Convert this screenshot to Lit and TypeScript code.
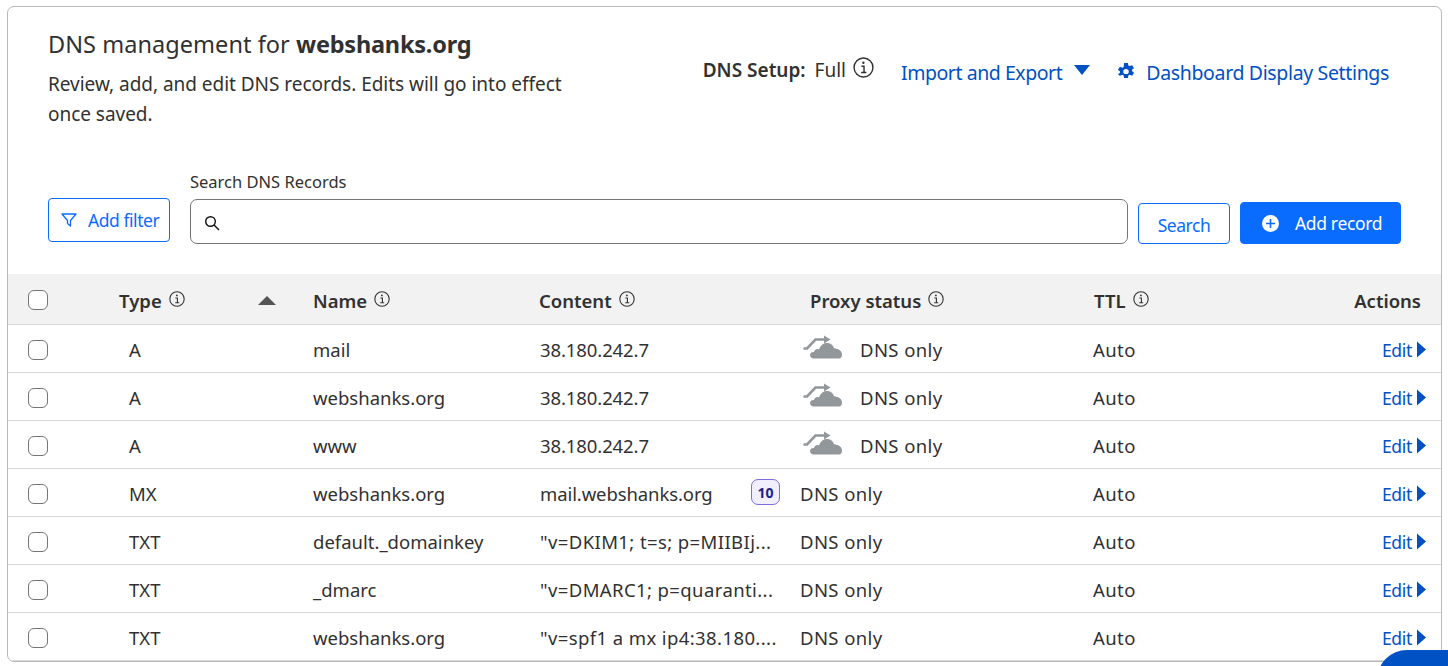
import { LitElement, html, css } from "lit";
import { customElement } from "lit/decorators.js";

const info = (cls = "info") => html`<svg class=${cls} viewBox="0 0 16 16" fill="none" stroke="#333" stroke-width="1.1"><circle cx="8" cy="8" r="7.2"/><path d="M6.4 7h2v4.6M6.2 11.8h4" /><circle cx="7.9" cy="4.4" r=".9" fill="#333" stroke="none"/></svg>`;

const cloud = html`<svg class="cloud" viewBox="0 0 40 24" fill="#92979b">
  <path d="M11 23.500C8 23.500 7 21.500 7 20 7 18 9 16.500 11 17 11.500 14.500 14 13.500 16 14.500 17.500 10.500 20 8 24 8 28 8 30.500 10.500 31 13.500 32 13 33 13.300 33.500 14 36.500 14 39 16.500 39 19.500 39 21.500 38 23.500 36 23.500Z"/>
  <path d="M0.500 13.500h3.500L12.500 4.500h9" fill="none" stroke="#92979b" stroke-width="2.600"/>
  <path d="M21 0.500l6.500 4-6.500 4z"/>
</svg>`;

const rows = [
  ["A", "mail", "38.180.242.7", true],
  ["A", "webshanks.org", "38.180.242.7", true],
  ["A", "www", "38.180.242.7", true],
  ["MX", "webshanks.org", "mail.webshanks.org", false, "10"],
  ["TXT", "default._domainkey", '"v=DKIM1; t=s; p=MIIBIj...', false],
  ["TXT", "_dmarc", '"v=DMARC1; p=quaranti...', false],
  ["TXT", "webshanks.org", '"v=spf1 a mx ip4:38.180....', false],
] as [string, string, string, boolean, string?][];

@customElement("app-root")
export class AppRoot extends LitElement {
  static styles = css`
    :host { display: block; height: 666px; box-sizing: border-box; padding: 6px 6px 4px 7px; position: relative; overflow: hidden; background: #fff;
      font-family: "Noto Sans", "Open Sans", sans-serif; color: #313131; font-size: 18px; }
    * { box-sizing: border-box; }
    .card { height: 656px; border: 1px solid #b9b9b9; border-radius: 7px; overflow: hidden; display: flex; flex-direction: column; }
    .top { height: 267px; padding: 0 40px; display: flex; flex-direction: column; }
    .head { display: flex; justify-content: space-between; height: 163px; }
    .intro { padding-top: 21px; }
    h1 { margin: 0; font-size: 23.5px; font-weight: 400; line-height: 32px; letter-spacing: .05px; }
    h1 b { font-weight: 700; letter-spacing: -.22px; }
    p { margin: 9px 0 0; width: 530px; line-height: 30px; font-size: 19px; letter-spacing: -.03px; }
    .tools { display: flex; align-items: flex-start; padding: 47px 12px 0 0; }
    .setup { display: flex; align-items: center; height: 30px; margin-top: 1px; font-size: 19px; }
    .setup b { font-weight: 600; margin-right: 9px; }
    .setup .big { width: 21px; height: 21px; margin: -6px 0 0 7px; }
    a { color: #0051c3; text-decoration: none; }
    .link { display: flex; align-items: center; height: 30px; margin-top: 3px; font-size: 19.5px; letter-spacing: -.45px; }
    .imp { margin-left: 27px; }
    .dash { margin-left: 28px; letter-spacing: -.35px; }
    .tri { width: 16px; height: 10px; margin: -4px 0 0 12px; }
    .gear { width: 16px; height: 17px; margin: -2px 12px 0 0; }
    .bar { display: flex; align-items: flex-end; }
    .btn { height: 44px; border: 1px solid #0a6cff; border-radius: 4px; color: #0a6cff; display: flex; align-items: center; background: #fff; font-size: 17.5px; letter-spacing: -.45px; }
    .filter { width: 122px; padding-left: 11px; margin-bottom: 2px; }
    .filter svg { width: 18px; height: 18px; margin-right: 10px; }
    .field { flex: none; width: 938px; margin-left: 20px; }
    label { display: block; font-size: 16.5px; line-height: 24px; margin-bottom: 5px; }
    .input { height: 45px; border: 1px solid #757575; border-radius: 7px; display: flex; align-items: center; padding-left: 12px; }
    .input svg { width: 18px; height: 18px; margin-top: 2px; }
    .search { width: 92px; margin-left: 10px; justify-content: center; height: 41px; padding-top: 3px; }
    .add { width: 161px; height: 42px; margin-left: 10px; background: #0a6cff; color: #fff; padding-left: 21px; letter-spacing: -.35px; }
    .add svg { width: 17px; height: 17px; margin-right: 16px; }
    .row { display: grid; grid-template-columns: 111px 194px 226px 261px 294px 1fr; align-items: center; height: 48px; padding-top: 2px; border-bottom: 1px solid #d9d9d9; font-size: 18.5px; }
    .row.th { height: 51px; background: #f2f2f2; font-weight: 600; }
    .c { display: flex; align-items: center; }
    .info { width: 16px; height: 16px; margin: -3px 0 0 7px; flex: none; }
    .check { width: 20px; height: 20px; border: 1px solid #757575; border-radius: 6px; background: #fff; margin-left: 20px; }
    .type { padding-left: 10px; }
    .sort { justify-content: space-between; padding-right: 37px; }
    .sort > svg { width: 18px; height: 9px; margin-top: 0; }
    .con { display: flex; align-items: center; justify-content: space-between; padding: 0 20px 0 1px; letter-spacing: -.1px; }
    .con.long { letter-spacing: .4px; }
    .badge { width: 29px; height: 26px; border: 1px solid #7b6fe0; border-radius: 7px; background: #f1eefd; color: #1d1f8c; font-size: 14px; font-weight: 700; display: flex; align-items: center; justify-content: center; margin-top: -3px; letter-spacing: 0; }
    .prox { display: flex; align-items: center; letter-spacing: .4px; }
    .cloud { width: 40px; height: 24px; margin: -5px 17px 0 3px; flex: none; }
    .hprox { padding-left: 10px; }
    .last { display: flex; justify-content: space-between; align-items: center; padding-right: 15px; letter-spacing: .4px; margin-left: -1px; }
    .th .last { padding-right: 20px; margin-left: 0; letter-spacing: 0; }
    .edit { display: flex; align-items: center; font-size: 17.5px; letter-spacing: -.3px; }
    .edit svg { width: 9px; height: 17px; margin-left: 5px; }
    .fab { position: absolute; left: 1377px; top: 650px; width: 120px; height: 60px; background: #0051c3; border-radius: 30px; }
  `;

  render() {
    return html`<div class="card">
      <div class="top">
        <div class="head">
          <div class="intro">
            <h1>DNS management for <b>webshanks.org</b></h1>
            <p>Review, add, and edit DNS records. Edits will go into effect once saved.</p>
          </div>
          <div class="tools">
            <div class="setup"><b>DNS Setup:</b> Full ${info("big")}</div>
            <a class="link imp">Import and Export <svg class="tri" viewBox="0 0 16 10" fill="#0051c3"><path d="M0 0h16l-8 10z"/></svg></a>
            <a class="link dash"><svg class="gear" viewBox="0.8 0 14.4 16.400" preserveAspectRatio="none" fill="#0051c3"><path fill-rule="evenodd" d="M6.300 0h3.400l.4 2.300 1.200.7 2.200-.8 1.700 2.900-1.800 1.500v1.200l1.800 1.500-1.700 2.900-2.200-.8-1.200.7-.4 2.300H6.300l-.4-2.300-1.200-.7-2.200.8L.8 10.800l1.800-1.500V8.100L.8 6.600l1.700-2.900 2.200.8 1.200-.7zM8 5.700a2.500 2.500 0 100 5 2.500 2.500 0 000-5z"/></svg>Dashboard Display Settings</a>
          </div>
        </div>
        <div class="bar">
          <div class="btn filter"><svg viewBox="0 0 18 18" fill="none" stroke="#0a6cff" stroke-width="1.300"><path d="M2 3h14l-5.500 6.500v5.500l-3-2.500v-3z" stroke-linejoin="round"/></svg>Add filter</div>
          <div class="field">
            <label>Search DNS Records</label>
            <div class="input"><svg viewBox="0 0 18 18" fill="none" stroke="#111" stroke-width="1.400"><circle cx="7.500" cy="7.500" r="4.800"/><path d="M11 11l5 5"/></svg></div>
          </div>
          <div class="btn search">Search</div>
          <div class="btn add"><svg viewBox="0 0 17 17"><circle cx="8.500" cy="8.500" r="8.500" fill="#fff"/><path d="M8.500 4v9M4 8.500h9" stroke="#0a6cff" stroke-width="1.600"/></svg>Add record</div>
        </div>
      </div>
      <div class="row th">
        <div class="check"></div>
        <div class="c sort"><span class="c">Type ${info()}</span><svg viewBox="0 0 18 9" fill="#555"><path d="M9 0l9 9H0z"/></svg></div>
        <div class="c">Name ${info()}</div>
        <div class="c">Content ${info()}</div>
        <div class="c hprox">Proxy status ${info()}</div>
        <div class="last"><span class="c">TTL ${info()}</span><span>Actions</span></div>
      </div>
      ${rows.map(r => html`<div class="row">
        <div class="check"></div>
        <div class="type">${r[0]}</div>
        <div>${r[1]}</div>
        <div class="con ${r[0] === "TXT" ? "long" : ""}"><span>${r[2]}</span>${r[4] ? html`<span class="badge">${r[4]}</span>` : ""}</div>
        <div class="prox">${r[3] ? cloud : ""}DNS only</div>
        <div class="last">
          <span>Auto</span>
          <a class="edit">Edit<svg viewBox="0 0 10 18" fill="#0051c3"><path d="M0 0l10 9-10 9z"/></svg></a>
        </div>
      </div>`)}
    </div>
    <div class="fab"></div>`;
  }
}
